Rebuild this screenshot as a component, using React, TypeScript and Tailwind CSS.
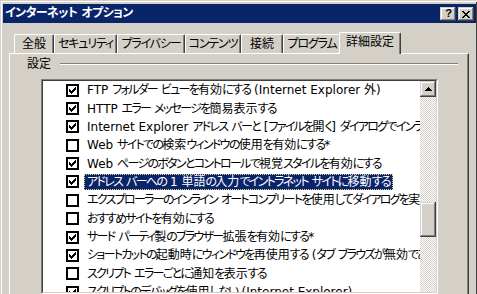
import React from "react";

const FONT = "font-['DejaVu_Sans','Noto_Sans_CJK_JP',sans-serif] [font-feature-settings:'palt']";

const RAISED =
  "shadow-[inset_-1px_-1px_#404040,inset_1px_1px_#d4d0c8,inset_-2px_-2px_#808080,inset_2px_2px_#ffffff]";

function JText({ text, kana = "tracking-[-1.7px]" }: { text: string; kana?: string }) {
  const parts = text.split(/([\u3040-\u30ff]+)/);
  return (
    <>
      {parts.map((p, i) =>
        /^[\u3040-\u30ff]+$/.test(p) ? (
          <span key={i} className={kana}>
            {p}
          </span>
        ) : (
          <span key={i}>{p}</span>
        )
      )}
    </>
  );
}

function CheckBox({ checked }: { checked: boolean }) {
  return (
    <svg width="13" height="13" viewBox="0 0 13 13" shapeRendering="crispEdges" className="shrink-0">
      <rect x="1" y="1" width="11" height="11" fill="#fff" stroke="#000" strokeWidth="2" />
      {checked && (
        <path
          d="M3 5h1v3H3zM4 6h1v3H4zM5 7h1v3H5zM6 6h1v3H6zM7 5h1v3H7zM8 4h1v3H8zM9 3h1v3H9z"
          fill="#000"
        />
      )}
    </svg>
  );
}

const items: { text: string; checked: boolean; selected?: boolean }[] = [
  { text: "FTP フォルダー ビューを有効にする (Internet Explorer 外)", checked: true },
  { text: "HTTP エラー メッセージを簡易表示する", checked: true },
  {
    text: "Internet Explorer アドレス バーと [ファイルを開く] ダイアログでインライン オートコンプリートを使用する",
    checked: true,
  },
  { text: "Web サイトでの検索ウィンドウの使用を有効にする*", checked: false },
  { text: "Web ページのボタンとコントロールで視覚スタイルを有効にする", checked: true },
  { text: "アドレス バーへの 1 単語の入力でイントラネット サイトに移動する", checked: true, selected: true },
  { text: "エクスプローラーのインライン オートコンプリートを使用してダイアログを実行する", checked: false },
  { text: "おすすめサイトを有効にする", checked: false },
  { text: "サード パーティ製のブラウザー拡張を有効にする*", checked: true },
  { text: "ショートカットの起動時にウィンドウを再使用する (タブ ブラウズが無効である場合)", checked: true },
  { text: "スクリプト エラーごとに通知を表示する", checked: false },
  { text: "スクリプトのデバッグを使用しない (Internet Explorer)", checked: true },
];

const tabs: { label: string; w: string }[] = [
  { label: "全般", w: "w-[40px]" },
  { label: "セキュリティ", w: "w-[63px]" },
  { label: "プライバシー", w: "w-[68px]" },
  { label: "コンテンツ", w: "w-[56px]" },
  { label: "接続", w: "w-[42px]" },
  { label: "プログラム", w: "w-[58px]" },
];

export default function App() {
  return (
    <div
      className={`w-[477px] h-[294px] overflow-hidden bg-[#d4d0c8] text-[12px] leading-none text-black ${FONT} flex flex-col pl-[3px] pt-[4px] pr-[1px] shadow-[inset_1px_1px_#d4d0c8,inset_2px_2px_#ffffff,inset_-1px_0_#404040]`}
    >
      {/* Title bar */}
      <div className="h-[19px] bg-[#0a246a] flex items-center justify-between pl-[2px] pr-[2px] shrink-0">
        <span className="block text-white font-bold text-[12px] pb-[1px] whitespace-nowrap">
          <JText text="インターネット オプション" kana="tracking-[-0.6px]" />
        </span>
        <div className="flex gap-[2px] mt-[1px]">
          <div className={`w-[16px] h-[14px] bg-[#d4d0c8] ${RAISED} flex items-center justify-center`}>
            <span className="font-['Liberation_Sans',sans-serif] font-bold text-[11px] leading-none pb-[1px] pl-[1px]">?</span>
          </div>
          <div className={`w-[16px] h-[14px] bg-[#d4d0c8] ${RAISED} flex items-center justify-center`}>
            <svg width="8" height="7" viewBox="0 0 8 7" shapeRendering="crispEdges">
              <path
                d="M0 0h2v1H0zM1 1h2v1H1zM2 2h2v1H2zM3 3h2v1H3zM2 4h2v1H2zM1 5h2v1H1zM0 6h2v1H0zM6 0h2v1H6zM5 1h2v1H5zM4 2h2v1H4zM4 4h2v1H4zM5 5h2v1H5zM6 6h2v1H6z"
                fill="#000"
              />
            </svg>
          </div>
        </div>
      </div>

      {/* Tabs */}
      <div className="mt-[9px] ml-[11px] h-[21px] flex items-end shrink-0">
        {tabs.map((t) => (
          <div
            key={t.label}
            className={`${t.w} h-[19px] whitespace-nowrap border-t border-l border-white border-r border-r-[#404040] shadow-[inset_-1px_0_#808080] rounded-t-[2px] flex items-center justify-center pb-[1px]`}
          >
            <span className="block">
              <JText text={t.label} kana="tracking-[-1.2px]" />
            </span>
          </div>
        ))}
        <div className="relative z-10 w-[62px] h-[22px] -mb-[1px] -ml-[2px] whitespace-nowrap bg-[#d4d0c8] border-t border-l border-white border-r border-r-[#404040] shadow-[inset_-1px_0_#808080] rounded-t-[2px] flex items-center justify-center pb-[3px]">
          詳細設定
        </div>
      </div>

      {/* Panel */}
      <div className="ml-[6px] w-[460px] flex-1 min-h-0 border-t border-l border-white border-r border-r-[#404040] shadow-[inset_-1px_0_#808080] flex flex-col">
        <div className="mt-[3px] h-[14px] flex items-center shrink-0">
          <span className="pl-[17px]">設定</span>
          <div className="ml-[9px] mr-[10px] flex-1 h-[2px] border-t border-t-[#808080] border-b border-b-white" />
        </div>

        <div className="mt-[8px] ml-[31px] w-[397px] flex-1 min-h-0 border-t border-l border-[#808080] border-r border-b border-r-white border-b-white">
          <div className="h-full border-t border-l border-[#404040] border-r border-b border-r-[#d4d0c8] border-b-[#d4d0c8] flex bg-white">
            <div className="flex-1 min-w-0 overflow-hidden">
              {items.map((it, i) => (
                <div key={i} className="h-[18.36px] flex items-center pl-[23px] whitespace-nowrap">
                  <CheckBox checked={it.checked} />
                  <span
                    className={
                      it.selected
                        ? "block ml-[5px] h-[16px] px-[2px] leading-[14px] bg-[#0a246a] text-white border border-dotted border-[#e8d48c]"
                        : "block ml-[6px] h-[16px] px-[2px] leading-[16px]"
                    }
                  >
                    <JText text={it.text} />
                  </span>
                </div>
              ))}
            </div>
            {/* Scrollbar */}
            <div className="w-[16px] shrink-0 flex flex-col">
              <div className={`h-[16px] bg-[#d4d0c8] ${RAISED} flex items-center justify-center shrink-0`}>
                <svg width="7" height="4" viewBox="0 0 7 4" shapeRendering="crispEdges">
                  <path d="M3 0h1v1H3zM2 1h3v1H2zM1 2h5v1H1zM0 3h7v1H0z" fill="#000" />
                </svg>
              </div>
              <div className="flex-1 bg-[image:repeating-conic-gradient(#d4d0c8_0%_25%,#ffffff_0%_50%)] bg-[length:2px_2px]">
                <div className={`mt-[105px] h-[35px] bg-[#d4d0c8] ${RAISED}`} />
              </div>
            </div>
          </div>
        </div>
      </div>
    </div>
  );
}
